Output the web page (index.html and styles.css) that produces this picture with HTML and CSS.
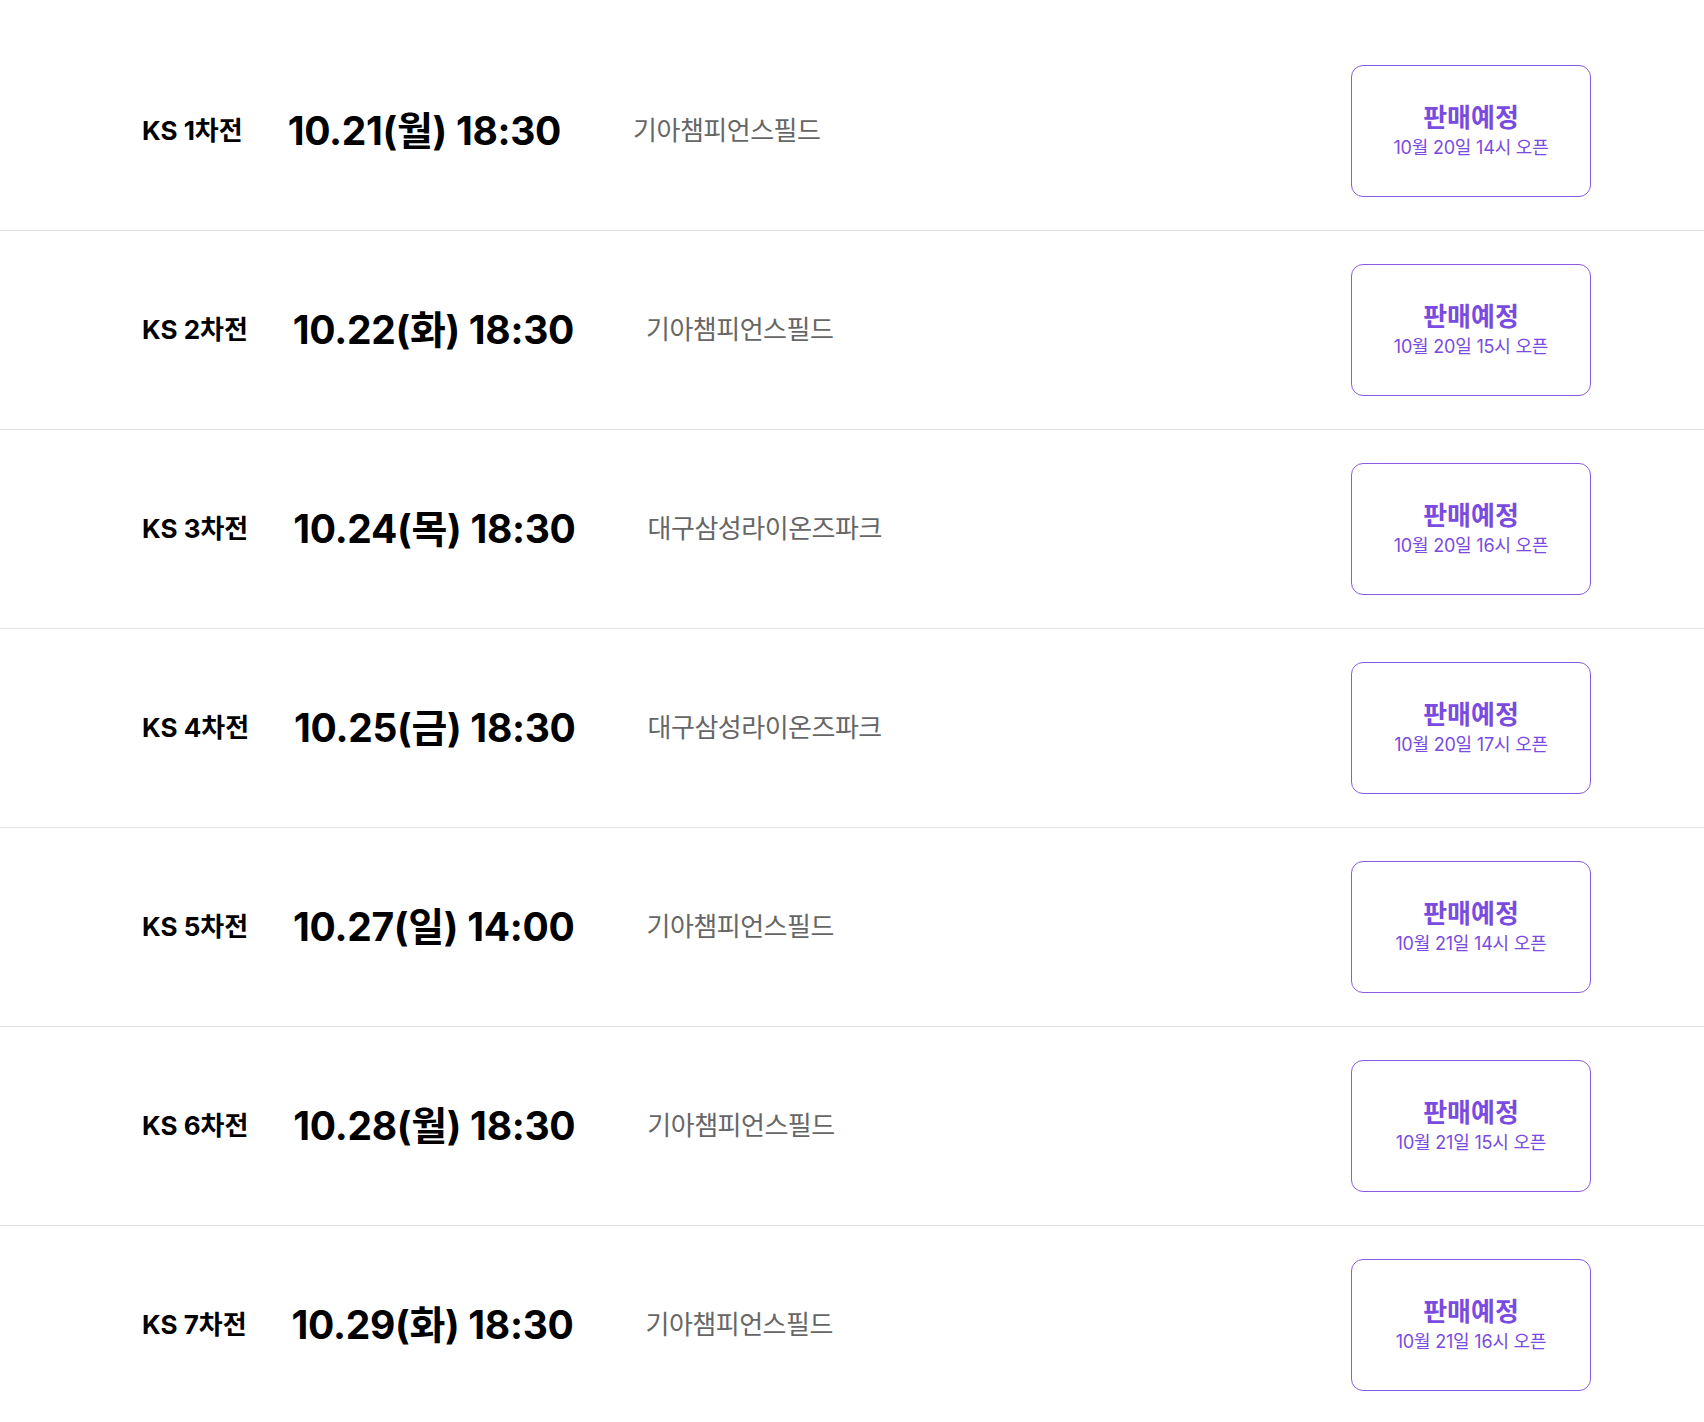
FILE: index.html
```html
<!DOCTYPE html>
<html lang="ko">
<head>
<meta charset="utf-8">
<title>KS 일정</title>
<link rel="stylesheet" href="styles.css">
</head>
<body>
<ul class="schedule">
  <li class="game">
    <span class="round">KS 1차전</span>
    <span class="date">10.21(월) 18:30</span>
    <span class="venue">기아챔피언스필드</span>
    <button class="sale"><strong>판매예정</strong><span>10월 20일 14시 오픈</span></button>
  </li>
  <li class="game">
    <span class="round">KS 2차전</span>
    <span class="date">10.22(화) 18:30</span>
    <span class="venue">기아챔피언스필드</span>
    <button class="sale"><strong>판매예정</strong><span>10월 20일 15시 오픈</span></button>
  </li>
  <li class="game">
    <span class="round">KS 3차전</span>
    <span class="date">10.24(목) 18:30</span>
    <span class="venue">대구삼성라이온즈파크</span>
    <button class="sale"><strong>판매예정</strong><span>10월 20일 16시 오픈</span></button>
  </li>
  <li class="game">
    <span class="round">KS 4차전</span>
    <span class="date">10.25(금) 18:30</span>
    <span class="venue">대구삼성라이온즈파크</span>
    <button class="sale"><strong>판매예정</strong><span>10월 20일 17시 오픈</span></button>
  </li>
  <li class="game">
    <span class="round">KS 5차전</span>
    <span class="date">10.27(일) 14:00</span>
    <span class="venue">기아챔피언스필드</span>
    <button class="sale"><strong>판매예정</strong><span>10월 21일 14시 오픈</span></button>
  </li>
  <li class="game">
    <span class="round">KS 6차전</span>
    <span class="date">10.28(월) 18:30</span>
    <span class="venue">기아챔피언스필드</span>
    <button class="sale"><strong>판매예정</strong><span>10월 21일 15시 오픈</span></button>
  </li>
  <li class="game">
    <span class="round">KS 7차전</span>
    <span class="date">10.29(화) 18:30</span>
    <span class="venue">기아챔피언스필드</span>
    <button class="sale"><strong>판매예정</strong><span>10월 21일 16시 오픈</span></button>
  </li>
</ul>
</body>
</html>
```
FILE: styles.css
```css
html, body {
  margin: 0;
  padding: 0;
  background: #ffffff;
}
body {
  font-family: "Inter", "Noto Sans CJK KR", sans-serif;
  color: #000;
}
.schedule {
  list-style: none;
  margin: 0;
  padding: 32px 0 0;
}
.game {
  display: flex;
  align-items: center;
  padding: 33px 113px 33px 142px;
  border-bottom: 1px solid #e2e2e2;
}
.round,
.date,
.venue {
  margin-bottom: 6px;
}
.round {
  font-size: 26px;
  font-weight: 700;
  margin-right: 45px;
}
.date {
  font-size: 39px;
  font-weight: 700;
  letter-spacing: -0.3px;
  margin-right: 72px;
}
.venue {
  font-size: 26px;
  font-weight: 400;
  letter-spacing: -0.5px;
  color: #666666;
  flex: 1;
}
.sale {
  width: 240px;
  height: 132px;
  box-sizing: border-box;
  border: 1.5px solid #8a5ae6;
  border-radius: 12px;
  background: #fff;
  display: flex;
  flex-direction: column;
  align-items: center;
  justify-content: center;
  gap: 3px;
  padding: 0;
  font-family: inherit;
  color: #7a4be0;
}
.sale strong {
  font-size: 26px;
  font-weight: 700;
  line-height: 1.2;
}
.sale span {
  font-size: 18px;
  font-weight: 400;
  letter-spacing: -0.2px;
  line-height: 1.3;
}
```
